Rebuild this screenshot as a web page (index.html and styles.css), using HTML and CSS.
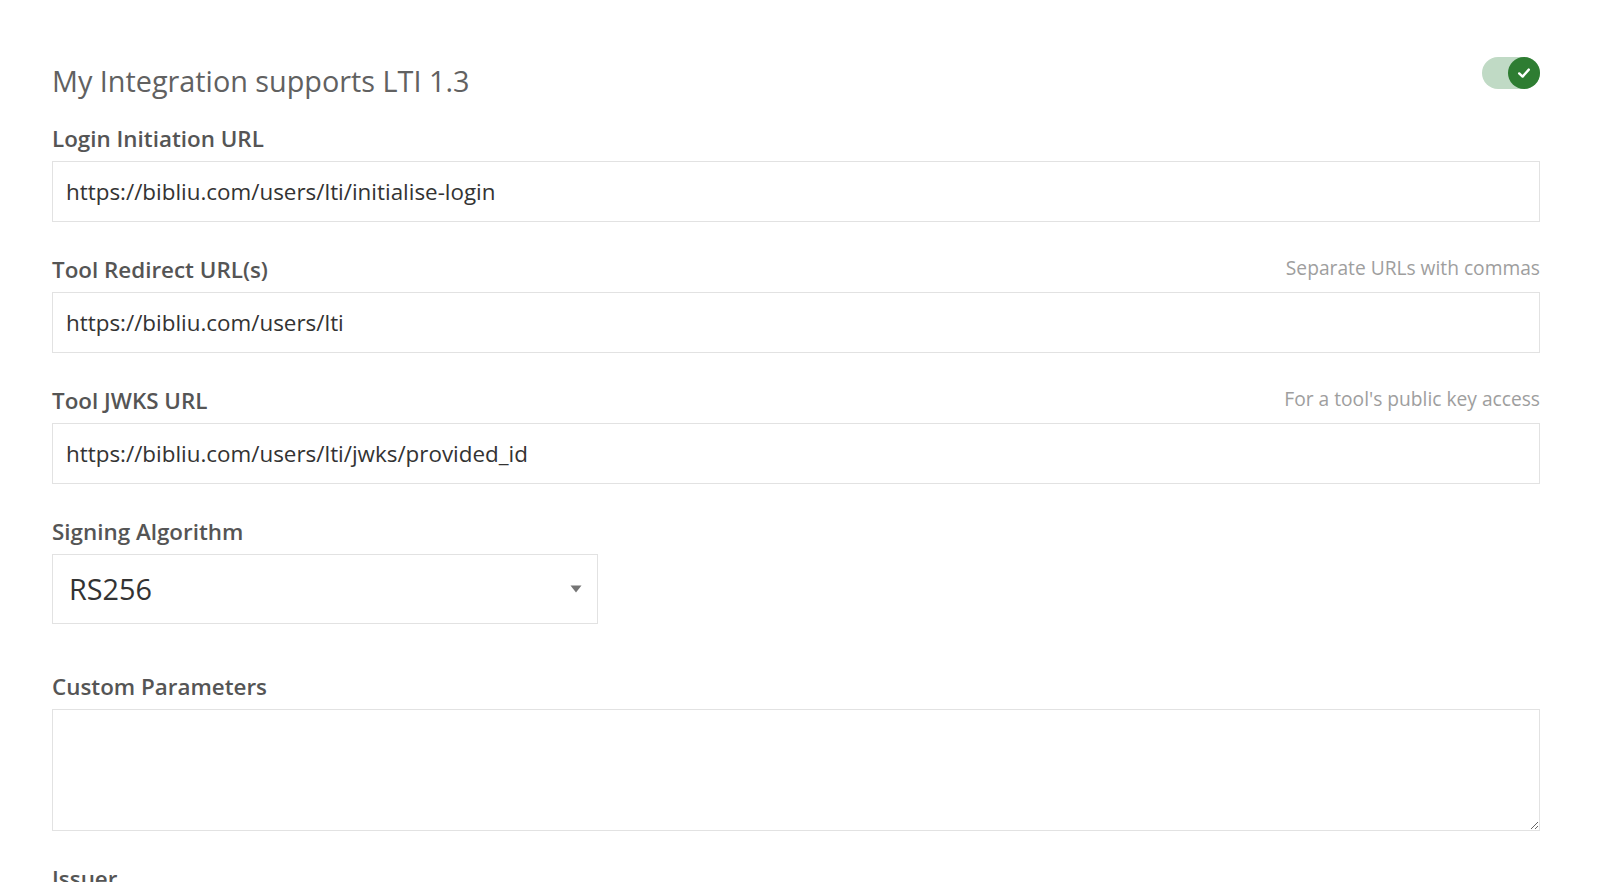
FILE: index.html
```html
<!DOCTYPE html>
<html lang="en">
<head>
<meta charset="utf-8">
<title>LTI 1.3</title>
<link rel="stylesheet" href="styles.css">
</head>
<body>
<main class="form">
  <div class="header">
    <h2 class="title">My Integration supports LTI 1.3</h2>
    <span class="toggle" role="switch" aria-checked="true">
      <span class="knob">
        <svg width="16" height="16" viewBox="0 0 16 16"><path d="M3.2 8.4 L6.6 11.6 L12.8 4.6" fill="none" stroke="#fff" stroke-width="2.4" stroke-linecap="round" stroke-linejoin="round"/></svg>
      </span>
    </span>
  </div>

  <div class="field">
    <div class="label-row"><label class="label">Login Initiation URL</label></div>
    <input class="input" type="text" value="https://bibliu.com/users/lti/initialise-login">
  </div>

  <div class="field">
    <div class="label-row"><label class="label">Tool Redirect URL(s)</label><span class="hint">Separate URLs with commas</span></div>
    <input class="input" type="text" value="https://bibliu.com/users/lti">
  </div>

  <div class="field">
    <div class="label-row"><label class="label">Tool JWKS URL</label><span class="hint">For a tool's public key access</span></div>
    <input class="input" type="text" value="https://bibliu.com/users/lti/jwks/provided_id">
  </div>

  <div class="field field-select">
    <div class="label-row"><label class="label">Signing Algorithm</label></div>
    <div class="select">
      <span class="select-value">RS256</span>
      <svg class="caret" width="12" height="8" viewBox="0 0 12 8"><path d="M0.5 0.5 H11.5 L6 7.5 Z" fill="#757575"/></svg>
    </div>
  </div>

  <div class="field">
    <div class="label-row"><label class="label">Custom Parameters</label></div>
    <textarea class="textarea"></textarea>
  </div>

  <div class="field">
    <div class="label-row"><label class="label">Issuer</label></div>
  </div>
</main>
</body>
</html>
```

FILE: styles.css
```css
html, body {
  margin: 0;
  padding: 0;
  background: #ffffff;
  overflow: hidden;
}

body {
  font-family: "Open Sans", "Liberation Sans", sans-serif;
  color: #333;
}

.form {
  padding: 57px 60px 0 52px;
  display: flex;
  flex-direction: column;
}

.header {
  display: flex;
  justify-content: space-between;
  align-items: flex-start;
  margin-bottom: 22px;
}

.title {
  margin: 4px 0 0 0;
  font-size: 28.8px;
  line-height: 40px;
  font-weight: 400;
  color: #616161;
}

.toggle {
  width: 58px;
  height: 32px;
  border-radius: 16px;
  background: #c0dac5;
  display: flex;
  justify-content: flex-end;
}

.knob {
  width: 32px;
  height: 32px;
  border-radius: 50%;
  background: #2e7d32;
  display: flex;
  align-items: center;
  justify-content: center;
}

.field {
  display: flex;
  flex-direction: column;
  margin-bottom: 32px;
}

.field-select {
  margin-bottom: 47px;
}

.label-row {
  display: flex;
  justify-content: space-between;
  align-items: flex-end;
  margin-bottom: 10px;
  height: 28px;
}

.label {
  font-size: 22.4px;
  line-height: 25px;
  font-weight: 600;
  color: #555555;
}

.hint {
  font-size: 19.2px;
  line-height: 28px;
  color: #9e9e9e;
}

.input {
  box-sizing: border-box;
  height: 61px;
  width: 100%;
  border: 1px solid #e2e2e2;
  border-radius: 0;
  padding: 0 13px;
  font-family: "Open Sans", "Liberation Sans", sans-serif;
  font-size: 22.4px;
  color: #333333;
  background: #fff;
  outline: none;
  margin: 0;
}

.select {
  box-sizing: border-box;
  width: 546px;
  height: 70px;
  border: 1px solid #e2e2e2;
  display: flex;
  align-items: center;
  justify-content: space-between;
  padding: 0 15px 0 16px;
}

.select-value {
  font-size: 28.8px;
  color: #333333;
  line-height: 40px;
}

.caret {
  display: block;
}

.textarea {
  box-sizing: border-box;
  width: 100%;
  height: 122px;
  border: 1px solid #e2e2e2;
  border-radius: 0;
  margin: 0;
  padding: 12px 13px;
  font-family: "Open Sans", "Liberation Sans", sans-serif;
  font-size: 22.4px;
  resize: vertical;
  outline: none;
  display: block;
}
```
